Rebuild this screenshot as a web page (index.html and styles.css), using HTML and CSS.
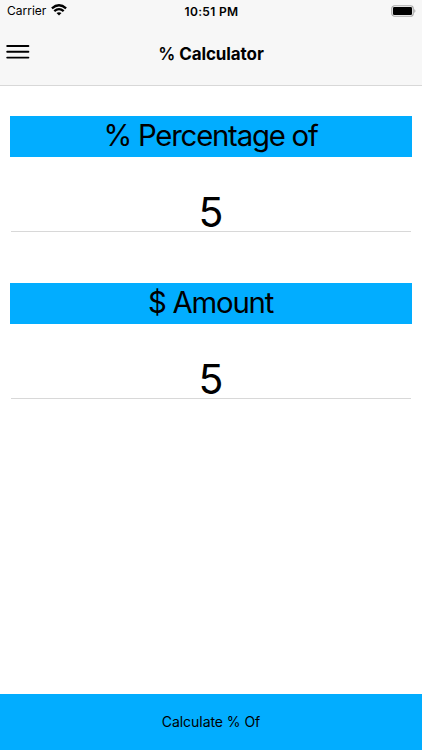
FILE: index.html
```html
<!DOCTYPE html>
<html lang="en">
<head>
<meta charset="utf-8">
<title>% Calculator</title>
<link rel="stylesheet" href="styles.css">
</head>
<body>
<div class="app">
  <header class="top">
    <div class="status">
      <div class="carrier"><span>Carrier</span>
        <svg class="wifi" width="16" height="12" viewBox="0 0 16 12"><g fill="none" stroke="#000" stroke-width="2.3"><path d="M.9 4.4Q8 -1.8 15.1 4.4"/><path d="M3.3 7.2Q8 3.1 12.7 7.2"/></g><path d="M5.5 9.1Q8 7.2 10.5 9.1L8 11.6Z"/></svg>
      </div>
      <div class="time">10:51 PM</div>
      <svg class="battery" width="25" height="12" viewBox="0 0 25 12"><rect x=".75" y=".75" width="21.5" height="10.5" rx="2.8" fill="none" stroke="#aaa" stroke-width="1.2"/><rect x="2" y="2" width="19" height="8" rx="1.3"/><path d="M23.4 4Q25.4 6 23.4 8Z" fill="#999"/></svg>
    </div>
    <div class="nav">
      <svg class="menu" width="24" height="16" viewBox="0 0 24 16"><path d="M1.2 2H22.4M1.2 7.8H22.4M1.2 13.6H22.4" stroke="#000" stroke-width="1.9" stroke-linecap="round"/></svg>
      <h1><span class="sign">%</span> Calculator</h1>
    </div>
  </header>
  <main>
    <section><h2>% Percentage of</h2><div class="value"><span>5</span></div></section>
    <section><h2>$ Amount</h2><div class="value"><span>5</span></div></section>
  </main>
  <button class="calc"><span>Calculate % Of</span></button>
</div>
</body>
</html>
```
FILE: styles.css
```css
* { box-sizing: border-box; }
body { margin: 0; font-family: Inter, sans-serif; color: #000; background: #fff; }
.app { height: 750px; display: flex; flex-direction: column; overflow: hidden; }
.top { height: 86px; background: #f7f7f7; border-bottom: 1px solid #d8d8d8; }
.status { height: 22px; display: grid; grid-template-columns: 1fr auto 1fr; align-items: center; padding: 0 6px 2px 7px; font-size: 12px; }
.carrier { display: flex; align-items: center; gap: 5px; line-height: 20px; }
.carrier span { padding-top: 1px; }
.wifi { margin-bottom: 1px; }
.time { font-weight: 600; letter-spacing: .35px; padding-top: 1px; }
.battery { justify-self: end; }
.nav { height: 63px; display: grid; grid-template-columns: 24px 1fr 24px; align-items: center; padding: 0 6px; }
.menu { margin-bottom: 4px; }
h1 { margin: 0; text-align: center; font-size: 17px; font-weight: 700; letter-spacing: -.1px; }
.sign { font-weight: 600; }
main { flex: 1; padding: 30px 10px 0; }
section { height: 167px; }
h2 { margin: 0; height: 41px; line-height: 39px; background: #02adff; text-align: center; font-size: 29.3px; font-weight: 400; letter-spacing: -1.2px; padding-right: 1px; }
.value { height: 75px; margin: 0 1px; border-bottom: 1px solid #d8d8d8; text-align: center; font-size: 41px; line-height: 50px; padding-top: 30px; }
.calc { height: 56px; border: 0; padding: 0 0 2px; background: #02adff; font: 14px Inter, sans-serif; letter-spacing: -.05px; color: #000; }
```
